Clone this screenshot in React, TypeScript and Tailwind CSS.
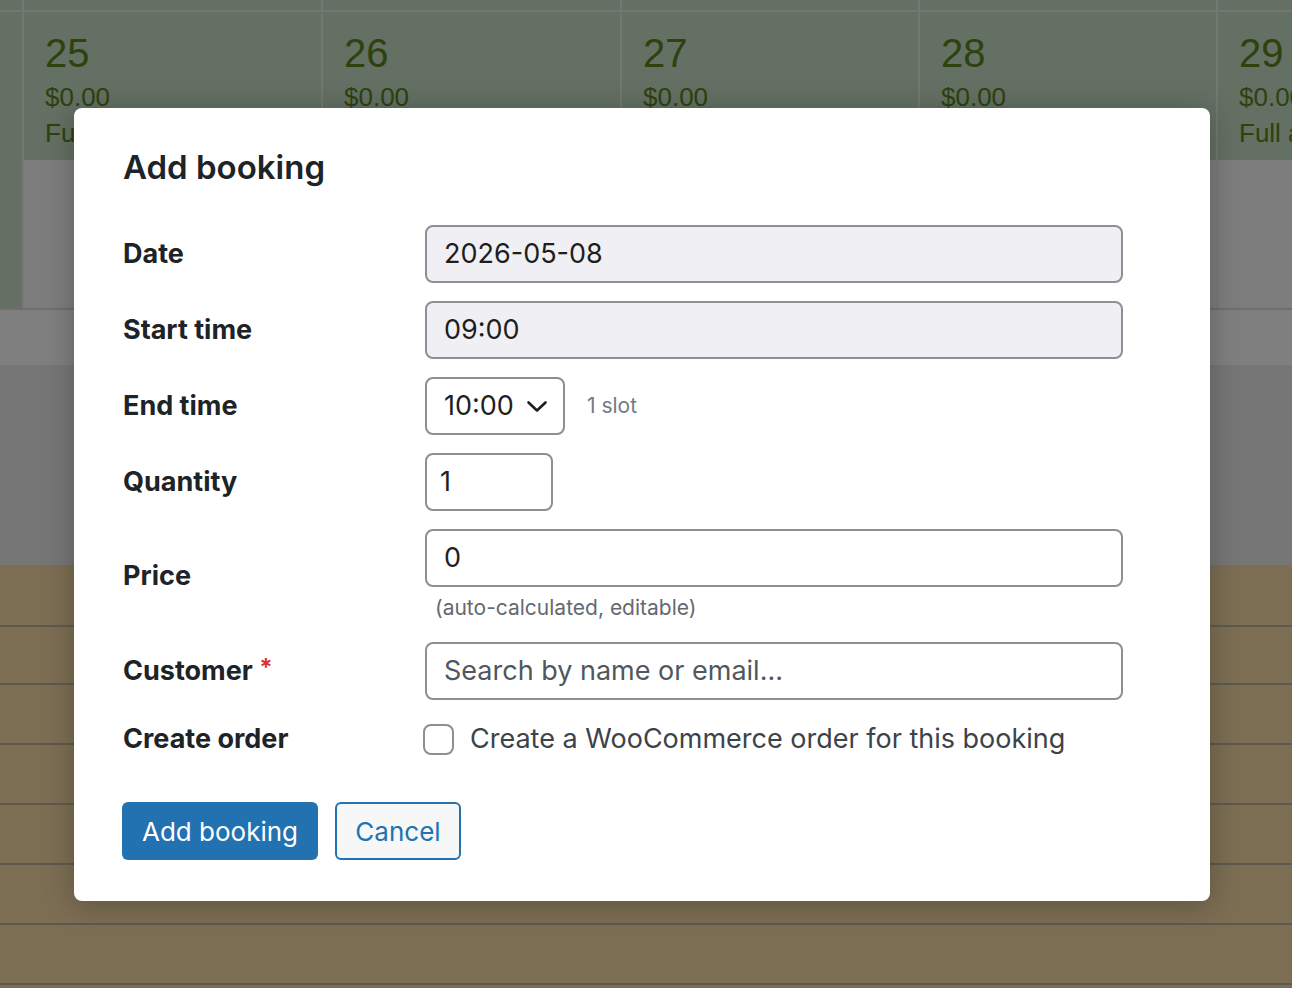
import React from "react";

const days = [
  { d: "25", w: "w-[299px] shrink-0", full: "Full availability" },
  { d: "26", w: "w-[299px] shrink-0", full: "Full availability" },
  { d: "27", w: "w-[298px] shrink-0", full: "Full availability" },
  { d: "28", w: "w-[298px] shrink-0", full: "Full availability" },
  { d: "29", w: "flex-1 min-w-0 overflow-hidden", full: "Full availability" },
];

function Calendar() {
  return (
    <div className="flex flex-col font-['Liberation_Sans',Arial,sans-serif]">
      {/* top thin row */}
      <div className="flex h-[12px] bg-[#c6e1c6] border-b-2 border-[#e3efe2]">
        <div className="w-[22px] shrink-0" />
        {days.map((c) => (
          <div key={c.d} className={`${c.w} border-l-2 border-[#e3efe2]`} />
        ))}
      </div>
      {/* day row */}
      <div className="flex h-[148px]">
        <div className="w-[22px] shrink-0 bg-[#c6e1c6]" />
        {days.map((c) => (
          <div
            key={c.d}
            className={`${c.w} border-l-2 border-[#e3efe2] bg-[#c6e1c6] pl-[21px] pt-[19px] text-[#5b841b]`}
          >
            <div className="text-[40px] leading-[44px]">{c.d}</div>
            <div className="mt-[4px] text-[26px] leading-[36px]">$0.00</div>
            <div className="text-[26px] leading-[36px] whitespace-nowrap">
              {c.full}
            </div>
          </div>
        ))}
      </div>
      {/* white row */}
      <div className="flex h-[148px]">
        <div className="w-[22px] shrink-0 bg-[#c6e1c6]" />
        {days.map((c) => (
          <div
            key={c.d}
            className={`${c.w} border-l-2 border-[#f0f0f0] bg-[#fbfbfb]`}
          />
        ))}
      </div>
      <div className="h-[2px] bg-[#dcdcde]" />
      <div className="h-[55px] bg-[#ffffff]" />
      <div className="h-[200px] bg-[#ececec]" />
      <div className="h-[62px] bg-[#f8dda7] border-b-2 border-[#bdb3a0]" />
      <div className="h-[58px] bg-[#f8dda7] border-b-2 border-[#bdb3a0]" />
      <div className="h-[60px] bg-[#f8dda7] border-b-2 border-[#bdb3a0]" />
      <div className="h-[60px] bg-[#f8dda7] border-b-2 border-[#bdb3a0]" />
      <div className="h-[60px] bg-[#f8dda7] border-b-2 border-[#bdb3a0]" />
      <div className="h-[60px] bg-[#f8dda7] border-b-2 border-[#bdb3a0]" />
      <div className="h-[60px] bg-[#f8dda7] border-b-2 border-[#bdb3a0]" />
      <div className="h-[60px] bg-[#f8dda7]" />
    </div>
  );
}

function Label({ children }: { children: React.ReactNode }) {
  return (
    <div className="w-[302px] shrink-0 text-[27px] font-bold leading-[34px] text-[#1d2327]">
      {children}
    </div>
  );
}

function Chevron() {
  return (
    <svg width="24" height="24" viewBox="0 0 24 24" fill="none">
      <path
        d="M3.5 8.5 L12 16.5 L20.5 8.5"
        stroke="#1e1e1e"
        strokeWidth="2.6"
        strokeLinecap="round"
        strokeLinejoin="round"
      />
    </svg>
  );
}

function Modal() {
  const inputBase =
    "h-[58px] rounded-[8px] border-2 border-[#8c8f94] flex items-center text-[27px] text-[#1e1e1e]";
  return (
    <div className="absolute left-[74px] top-[108px] w-[1136px] rounded-[8px] bg-white pl-[49px] pt-[39px] pb-[41px] shadow-[0_4px_30px_rgba(0,0,0,0.25)] font-[Inter,'Noto_Sans',sans-serif]">
      <h2 className="h-[40px] text-[33px] font-semibold leading-[40px] text-[#1d2327]">
        Add booking
      </h2>

      <div className="mt-[38px] flex items-center">
        <Label>Date</Label>
        <div className={`${inputBase} w-[698px] bg-[#f0f0f4] px-[17px]`}>
          2026-05-08
        </div>
      </div>

      <div className="mt-[18px] flex items-center">
        <Label>Start time</Label>
        <div className={`${inputBase} w-[698px] bg-[#f0f0f4] px-[17px]`}>
          09:00
        </div>
      </div>

      <div className="mt-[18px] flex items-center">
        <Label>End time</Label>
        <div
          className={`${inputBase} w-[140px] bg-white pl-[17px] pr-[14px] justify-between`}
        >
          <span>10:00</span>
          <Chevron />
        </div>
        <span className="ml-[22px] text-[21px] text-[#757a80]">1 slot</span>
      </div>

      <div className="mt-[18px] flex items-center">
        <Label>Quantity</Label>
        <div className={`${inputBase} w-[128px] bg-white px-[13px]`}>1</div>
      </div>

      <div className="mt-[18px] flex items-center">
        <Label>Price</Label>
        <div className="flex flex-col">
          <div className={`${inputBase} w-[698px] bg-white px-[17px]`}>0</div>
          <div className="mt-[7px] h-[28px] pl-[10px] text-[21px] leading-[28px] text-[#646970]">
            (auto-calculated, editable)
          </div>
        </div>
      </div>

      <div className="mt-[20px] flex items-center">
        <Label>
          Customer{" "}
          <span className="relative top-[-4px] text-[24px] text-[#d63638]">
            *
          </span>
        </Label>
        <div
          className={`${inputBase} w-[698px] bg-white px-[17px] text-[#50575e]`}
        >
          Search by name or email...
        </div>
      </div>

      <div className="mt-[22px] flex items-center">
        <Label>Create order</Label>
        <div className="ml-[-2px] h-[31px] w-[31px] rounded-[8px] border-2 border-[#8c8f94] bg-white" />
        <span className="ml-[16px] text-[27px] leading-[34px] text-[#3c434a]">
          Create a WooCommerce order for this booking
        </span>
      </div>

      <div className="mt-[46px] flex items-center gap-[17px] ml-[-1px]">
        <button className="h-[58px] w-[196px] rounded-[6px] bg-[#2271b1] text-[26px] text-white">
          Add booking
        </button>
        <button className="h-[58px] w-[126px] rounded-[6px] border-2 border-[#2271b1] bg-[#f6f7f7] text-[26px] text-[#2271b1]">
          Cancel
        </button>
      </div>
    </div>
  );
}

export default function App() {
  return (
    <div className="relative h-[988px] w-full overflow-hidden bg-white">
      <Calendar />
      <div className="absolute inset-0 bg-black/50" />
      <Modal />
    </div>
  );
}
